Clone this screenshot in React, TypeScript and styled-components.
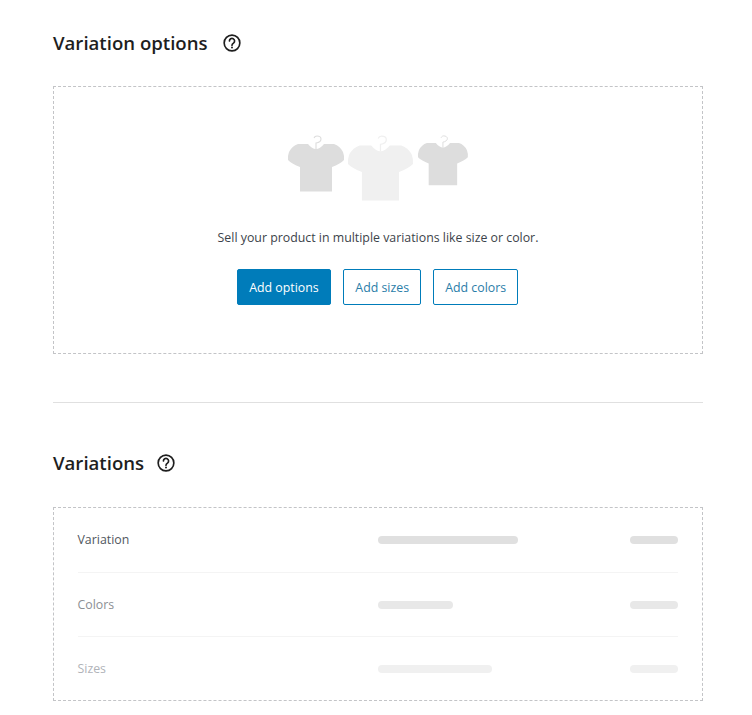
import React from "react";
import styled, { createGlobalStyle } from "styled-components";

const Global = createGlobalStyle`
  html, body { margin: 0; padding: 0; background: #fff; }
  body { font-family: "Open Sans", "Noto Sans", sans-serif; color: #1e1e1e; }
`;

const Page = styled.div`
  width: 650px;
  padding: 0 49px 0 53px;
  height: 715px;
  overflow: hidden;
`;

const Section = styled.section`
  padding-top: ${(p: { $top: number }) => p.$top}px;
`;

const Heading = styled.div<{ $gap: number; $iconGap: number }>`
  display: flex;
  align-items: center;
  gap: ${(p) => p.$iconGap}px;
  height: 26px;
  margin-bottom: ${(p) => p.$gap}px;
`;

const Title = styled.h2`
  margin: 0;
  font-size: 18.6px;
  line-height: 26px;
  font-weight: 600;
  color: #1e1e1e;
`;

const HelpIcon = styled.svg`
  width: 20px;
  height: 20px;
  display: block;
  color: #1e1e1e;
`;

const EmptyBox = styled.div`
  box-sizing: border-box;
  height: 268px;
  border: 1px dashed #c3c4c7;
  display: flex;
  flex-direction: column;
  align-items: center;
  padding-top: 47px;
`;

const Illustration = styled.svg`
  width: 182px;
  height: 70px;
  display: block;
`;

const Message = styled.p`
  margin: 25px 0 0;
  font-size: 12.35px;
  line-height: 18px;
  color: #3c434a;
`;

const Actions = styled.div`
  display: flex;
  gap: 12px;
  margin-top: 22px;
  padding-right: 1px;
`;

const Button = styled.button<{ $primary?: boolean }>`
  box-sizing: border-box;
  height: 36px;
  padding: 0 ${(p) => (p.$primary ? 11.5 : 11.1)}px;
  border: 1px solid #007cba;
  border-radius: 2px;
  background: ${(p) => (p.$primary ? "#007cba" : "#fff")};
  color: ${(p) => (p.$primary ? "#fff" : "#2a7da8")};
  font-family: inherit;
  font-size: 12.35px;
  font-weight: ${(p) => (p.$primary ? 500 : 400)};
`;

const Divider = styled.hr`
  margin: 48px 0 0;
  border: 0;
  border-top: 1px solid #e0e0e0;
`;

const TableBox = styled.div`
  box-sizing: border-box;
  height: 194px;
  border: 1px dashed #c3c4c7;
  padding: 0 24px 0 23.5px;
`;

const Row = styled.div<{ $height: number; $last?: boolean }>`
  box-sizing: border-box;
  height: ${(p) => p.$height}px;
  display: grid;
  grid-template-columns: 300.5px 1fr 48px;
  align-items: center;
  border-bottom: ${(p) => (p.$last ? "0" : "1px solid #f4f4f4")};
`;

const RowLabel = styled.span<{ $tone: string }>`
  font-size: 12.35px;
  line-height: 18px;
  color: ${(p) => p.$tone};
`;

const Bar = styled.div<{ $tone: string }>`
  height: 8px;
  border-radius: 4px;
  background: ${(p) => p.$tone};
`;

const Help = () => (
  <HelpIcon viewBox="0 0 24 24" fill="none" stroke="currentColor" strokeWidth="2">
    <circle cx="12" cy="12" r="9.4" />
    <path d="M8.9 9.6a3.1 3.1 0 1 1 4.9 2.5c-1 .7-1.8 1.3-1.8 2.5" strokeLinecap="round" />
    <circle cx="12" cy="17.3" r="1.2" fill="currentColor" stroke="none" />
  </HelpIcon>
);

const Shirt = ({ x, y, s, fill }: { x: number; y: number; s: number; fill: string }) => (
  <g transform={`translate(${x} ${y}) scale(${s})`}>
    <path d="M28 14V8c3-.5 5-2 5-4s-2-3-4-3c-1.5 0-2.5.8-3 2" fill="none" stroke={fill} strokeWidth="1.1" />
    <path
      d="M20 9Q28 19 36 9H46Q52 11 55 17 56.5 21 56 25 52 29 44 32V56.5H12V32Q4 29 0 25-.5 21 1 17 4 11 10 9Z"
      fill={fill}
    />
  </g>
);

const rows = [
  { label: "Variation", tone: "#50575e", bar: "#e0e0e0", width: 140, height: 65 },
  { label: "Colors", tone: "#8c8f94", bar: "#e8e8e8", width: 75, height: 64 },
  { label: "Sizes", tone: "#b0b3b8", bar: "#f0f0f0", width: 114, height: 63 },
];

export default function App() {
  return (
    <Page>
      <Global />
      <Section $top={30}>
        <Heading $gap={30} $iconGap={14}>
          <Title>Variation options</Title>
          <Help />
        </Heading>
        <EmptyBox>
          <Illustration viewBox="0 0 182 70">
            <Shirt x={1} y={1} s={1} fill="#dddddd" />
            <Shirt x={61} y={1} s={1.16} fill="#f0f0f0" />
            <Shirt x={131} y={1} s={0.89} fill="#dddddd" />
          </Illustration>
          <Message>Sell your product in multiple variations like size or color.</Message>
          <Actions>
            <Button $primary>Add options</Button>
            <Button>Add sizes</Button>
            <Button>Add colors</Button>
          </Actions>
        </EmptyBox>
      </Section>
      <Divider />
      <Section $top={47}>
        <Heading $gap={31} $iconGap={12}>
          <Title>Variations</Title>
          <Help />
        </Heading>
        <TableBox>
          {rows.map((r, i) => (
            <Row key={r.label} $height={r.height} $last={i === rows.length - 1}>
              <RowLabel $tone={r.tone}>{r.label}</RowLabel>
              <Bar $tone={r.bar} style={{ width: r.width }} />
              <Bar $tone={r.bar} />
            </Row>
          ))}
        </TableBox>
      </Section>
    </Page>
  );
}
